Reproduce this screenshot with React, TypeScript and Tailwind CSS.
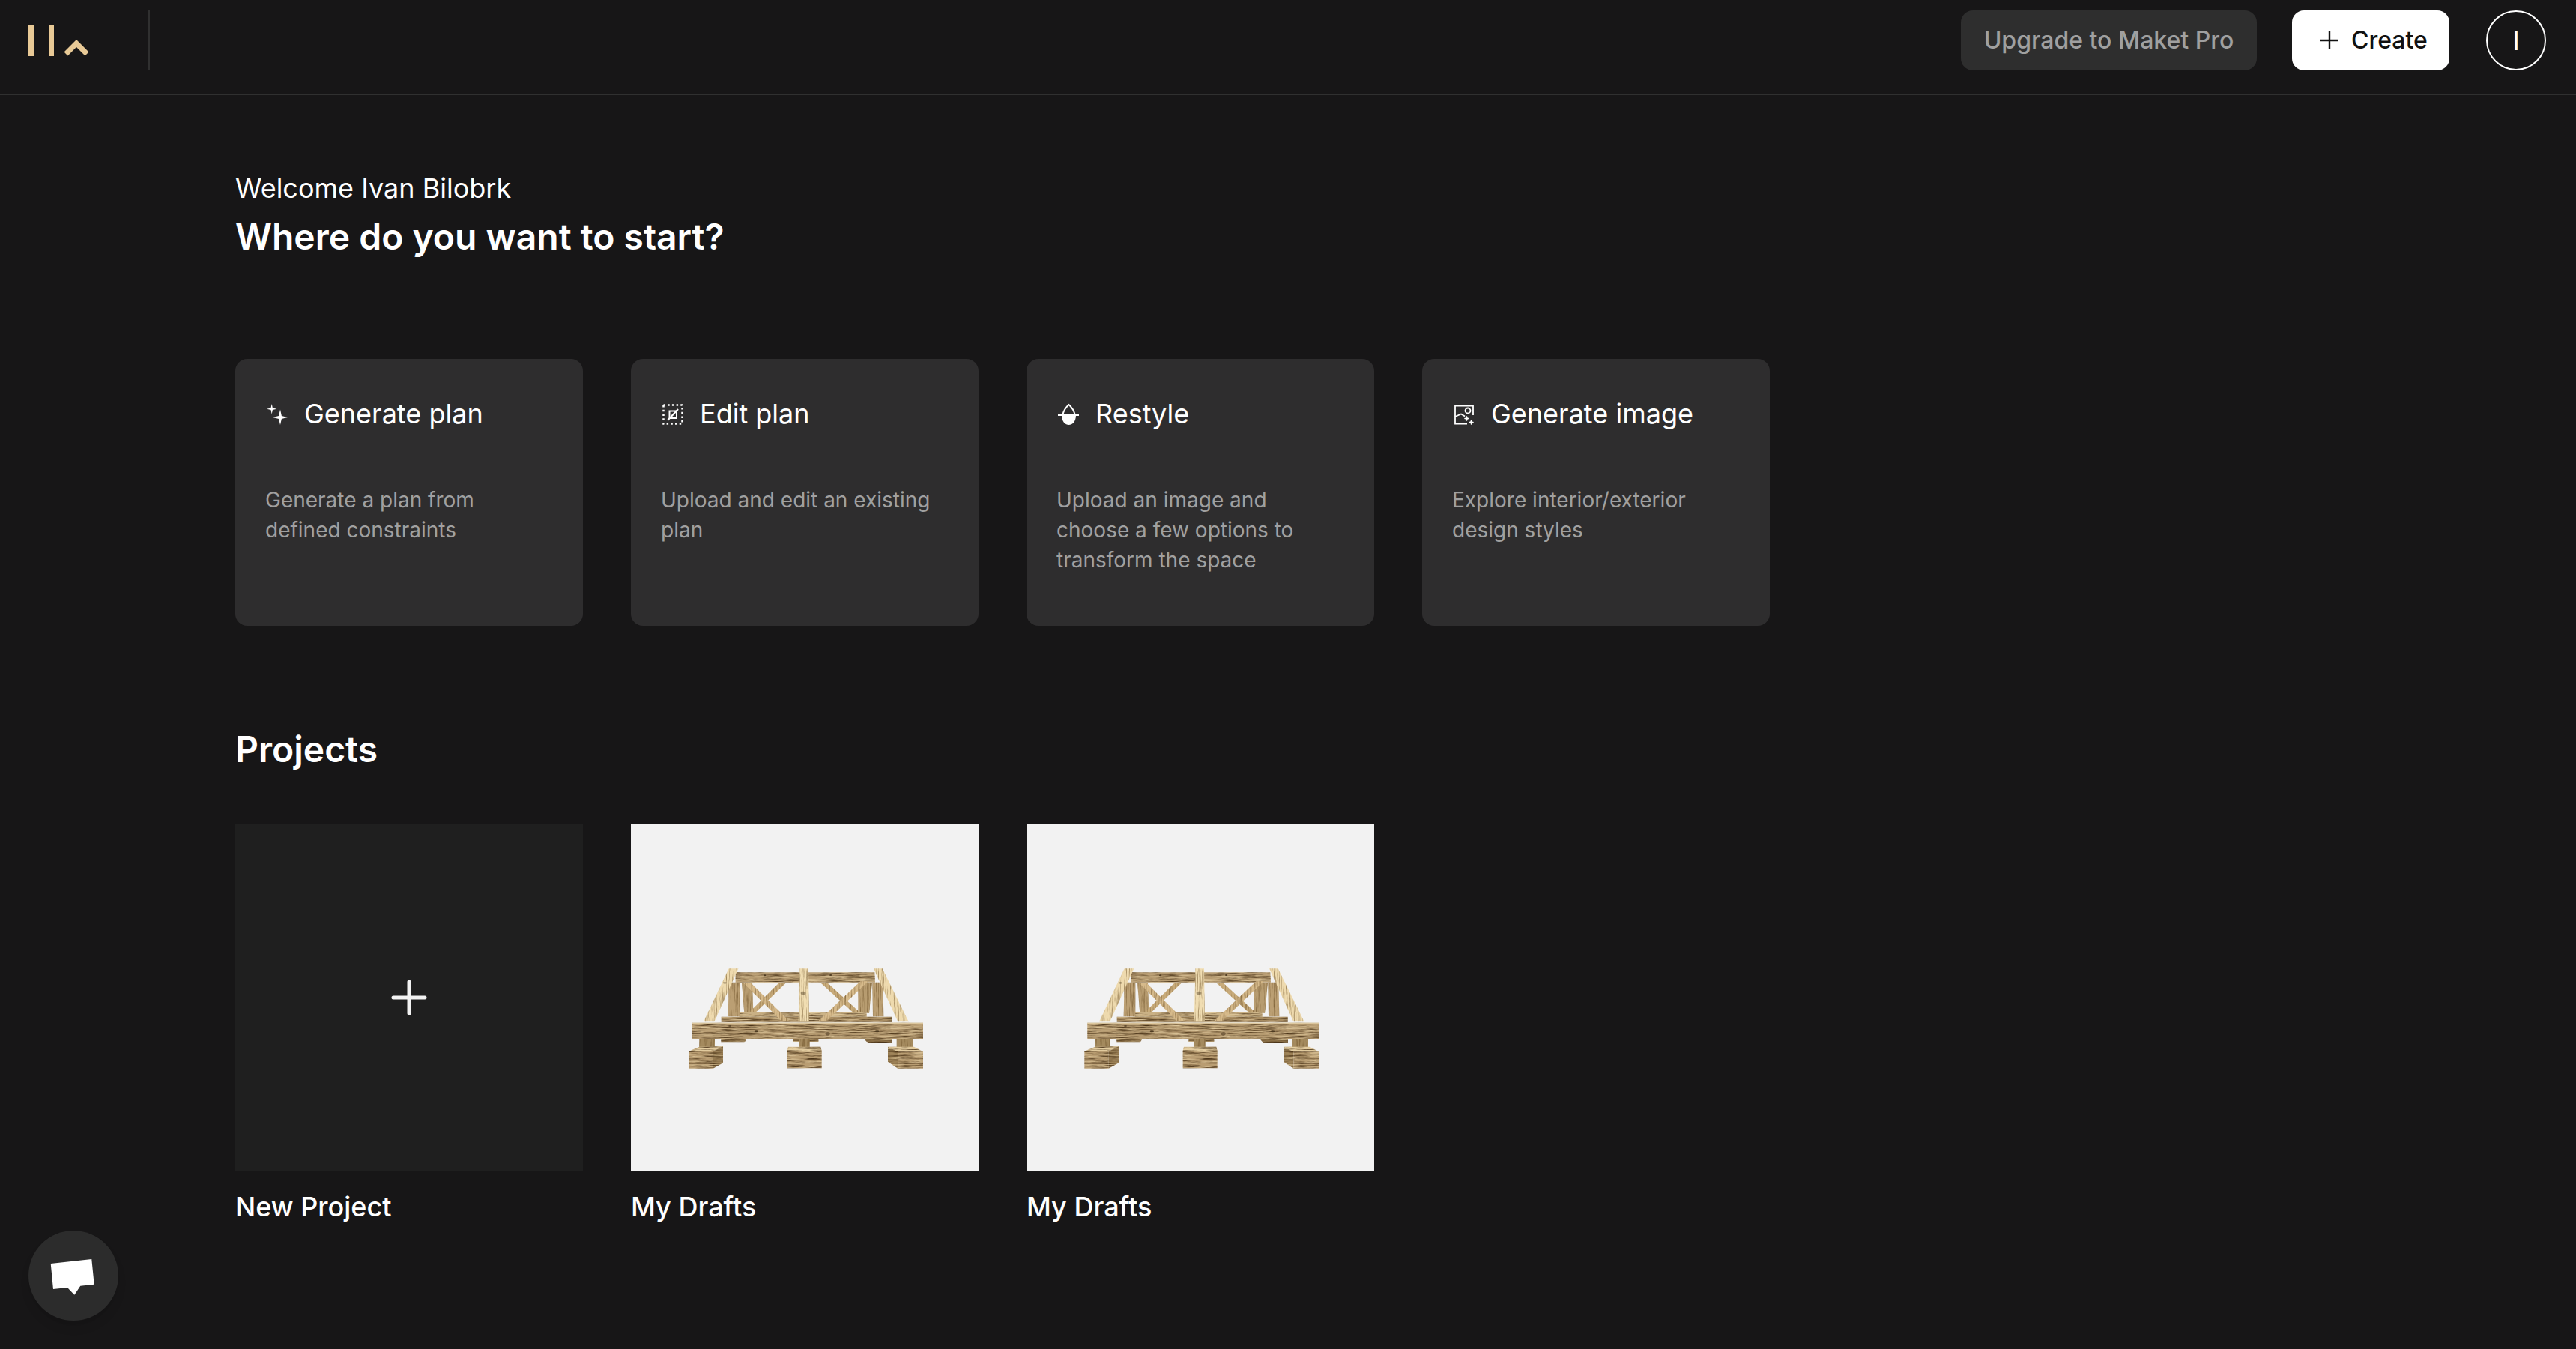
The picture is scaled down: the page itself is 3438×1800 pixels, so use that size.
import React from "react";

const cards = [
  { title: "Generate plan", desc: ["Generate a plan from", "defined constraints"], icon: "sparkle" },
  { title: "Edit plan", desc: ["Upload and edit an existing", "plan"], icon: "edit" },
  { title: "Restyle", desc: ["Upload an image and", "choose a few options to", "transform the space"], icon: "restyle" },
  { title: "Generate image", desc: ["Explore interior/exterior", "design styles"], icon: "image" },
];

const CardIcon = ({ name }: { name: string }) => {
  if (name === "sparkle") {
    return (
      <svg width="30" height="30" viewBox="0 0 30 30" fill="white" className="shrink-0">
        <path d="M8.700 2 L9.900 7.500 L15.400 8.700 L9.900 9.900 L8.700 15.400 L7.500 9.900 L2 8.700 L7.500 7.500 Z" />
        <path d="M20 9.500 L21.900 18.100 L30 20 L21.900 21.900 L20 30 L18.100 21.900 L10 20 L18.100 18.100 Z" />
      </svg>
    );
  }
  if (name === "edit") {
    return (
      <svg width="30" height="30" viewBox="0 0 30 30" fill="none" stroke="white" className="shrink-0">
        <rect x="3.500" y="3.500" width="25" height="25" strokeWidth="2.500" strokeDasharray="2.500 3.200" />
        <rect x="11.500" y="11.500" width="9.500" height="9.500" strokeWidth="2" />
        <path d="M9 24 L23 9" strokeWidth="2.200" />
      </svg>
    );
  }
  if (name === "restyle") {
    return (
      <svg width="30" height="30" viewBox="0 0 30 30" fill="none" className="shrink-0">
        <path d="M8 17 C10 10 13 6 16.500 3 C20 6 23 10 25 17" stroke="white" strokeWidth="2" />
        <path d="M2 17 H31" stroke="white" strokeWidth="2" />
        <path d="M7 17 H26 C26 26 21 30 16.500 30 C12 30 7 26 7 17 Z" fill="white" />
      </svg>
    );
  }
  return (
    <svg width="30" height="30" viewBox="0 0 30 30" fill="none" stroke="white" strokeWidth="1.800" className="shrink-0">
      <path d="M28 17 V4.500 H4 V28.500 H20" />
      <path d="M4 19 L12 15.500 L17 18.500" />
      <circle cx="21" cy="11" r="3.500" />
      <path d="M19.500 18 L20.500 20.500 L23 21.500 L20.500 22.500 L19.500 25 L18.500 22.500 L16 21.500 L18.500 20.500 Z" fill="white" strokeWidth="0.400" />
      <path d="M25.500 23 L26.500 25.500 L29 26.500 L26.500 27.500 L25.500 30 L24.500 27.500 L22 26.500 L24.500 25.500 Z" fill="white" strokeWidth="0.400" />
    </svg>
  );
};

// wooden truss from the project thumbnail, traced in 3x crop coordinates
const Truss = () => (
  <svg width="400" height="240" viewBox="0 0 1200 720">
    <defs>
      <filter id="grainH" x="0" y="0" width="100%" height="100%" colorInterpolationFilters="sRGB">
        <feTurbulence type="fractalNoise" baseFrequency="0.012 0.3" numOctaves="4" seed="4" result="n1" />
        <feColorMatrix in="n1" values="0 0 0 0 0.3 0 0 0 0 0.21 0 0 0 0 0.1 2.4 0 0 0 -1.05" result="dark" />
        <feComposite in="dark" in2="SourceAlpha" operator="in" result="darkIn" />
        <feTurbulence type="fractalNoise" baseFrequency="0.009 0.22" numOctaves="3" seed="21" result="n2" />
        <feColorMatrix in="n2" values="0 0 0 0 0.93 0 0 0 0 0.85 0 0 0 0 0.68 2.2 0 0 0 -1.05" result="light" />
        <feComposite in="light" in2="SourceAlpha" operator="in" result="lightIn" />
        <feMerge result="wood">
          <feMergeNode in="SourceGraphic" />
          <feMergeNode in="lightIn" />
          <feMergeNode in="darkIn" />
        </feMerge>
        <feGaussianBlur in="wood" stdDeviation="0.8" />
      </filter>
      <filter id="grainV" x="0" y="0" width="100%" height="100%" colorInterpolationFilters="sRGB">
        <feTurbulence type="fractalNoise" baseFrequency="0.25 0.012" numOctaves="4" seed="9" result="n1" />
        <feColorMatrix in="n1" values="0 0 0 0 0.42 0 0 0 0 0.31 0 0 0 0 0.15 1.8 0 0 0 -0.85" result="dark" />
        <feComposite in="dark" in2="SourceAlpha" operator="in" result="darkIn" />
        <feMerge result="wood">
          <feMergeNode in="SourceGraphic" />
          <feMergeNode in="darkIn" />
        </feMerge>
        <feGaussianBlur in="wood" stdDeviation="0.8" />
      </filter>
    </defs>
    <g filter="url(#grainV)">
      <polygon fill="#b79c70" points="330,215 372,215 376,330 340,336" />
      <polygon fill="#b79c70" points="796,215 852,215 840,336 796,330" />
      <polygon fill="#c8ab7a" points="480,213 508,213 388,330 362,330" />
      <polygon fill="#c8ab7a" points="645,213 672,213 800,330 775,332" />
    </g>
    <g filter="url(#grainH)">
      <polygon fill="#c9b084" points="320,332 830,332 830,350 320,350" />
      <polygon fill="#b79c72" points="305,172 862,172 864,212 305,212" />
      <polygon fill="#a98d62" points="248,350 932,350 932,371 248,371" />
    </g>
    <g filter="url(#grainV)">
      <polygon fill="#d6ba8b" points="335,213 365,213 521,368 490,368" />
      <polygon fill="#d6ba8b" points="805,208 836,208 668,368 636,368" />
      <polygon fill="#bb9f73" points="278,212 322,212 322,349 275,349" />
      <polygon fill="#bb9f73" points="853,212 895,212 898,349 855,349" />
      <polygon fill="#f0ddb2" points="562,157 597,157 600,370 557,370" />
      <polygon fill="#eedaae" points="278,157 316,157 220,370 177,370" />
      <polygon fill="#eedaae" points="858,157 893,157 998,370 955,370" />
    </g>
    <g filter="url(#grainH)">
      <polygon fill="#8a6f47" points="247,438 350,438 340,454 247,454" />
      <polygon fill="#8a6f47" points="535,438 637,438 637,452 535,452" />
      <polygon fill="#8a6f47" points="820,438 933,438 933,456 835,456" />
      <polygon fill="#b59a70" points="130,374 1056,374 1056,438 130,438" />
    </g>
    <g filter="url(#grainV)">
      <polygon fill="#a48a5e" points="160,438 222,438 222,480 160,486" />
      <polygon fill="#a48a5e" points="558,438 602,438 602,486 558,486" />
      <polygon fill="#a48a5e" points="950,438 1014,438 1014,486 950,480" />
    </g>
    <g filter="url(#grainH)">
      <polygon fill="#e2cb9e" points="118,488 160,470 255,468 215,488" />
      <polygon fill="#b99d72" points="118,488 215,488 215,557 118,557" />
      <polygon fill="#9c8156" points="215,488 255,468 255,535 215,557" />
      <polygon fill="#e2cb9e" points="512,486 516,470 646,470 650,486" />
      <polygon fill="#b99d72" points="512,486 650,486 650,556 512,556" />
      <polygon fill="#e2cb9e" points="915,470 1020,470 1056,490 955,490" />
      <polygon fill="#9c8156" points="915,470 955,490 955,557 915,530" />
      <polygon fill="#b99d72" points="955,490 1056,490 1056,557 955,557" />
    </g>
    <polygon fill="#e8d5ab" opacity="0.8" points="130,374 1056,374 1056,379 130,379" />
    <g fill="#4e3b22">
      <ellipse cx="422" cy="184" rx="5" ry="3" />
      <ellipse cx="686" cy="183" rx="5" ry="3" />
      <ellipse cx="388" cy="409" rx="8" ry="3" />
      <ellipse cx="872" cy="409" rx="8" ry="3" />
      <ellipse cx="674" cy="418" rx="9" ry="7" opacity="0.6" />
      <ellipse cx="282" cy="387" rx="6" ry="2.500" />
      <ellipse cx="576" cy="255" rx="10" ry="7" opacity="0.45" />
      <ellipse cx="262" cy="214" rx="8" ry="4" opacity="0.35" />
    </g>
  </svg>
);

const App = () => {
  return (
    <div className="relative min-h-[1800px] bg-[#171617] text-white font-['Inter',sans-serif]">
      <header className="flex items-start h-[127px] pt-[14px] border-b-2 border-[#303030] box-border">
        <svg className="ml-[38px] mt-[19px]" width="80" height="42" viewBox="0 0 80 42" fill="#e8c996">
          <rect x="0" y="0" width="7" height="42" />
          <rect x="27" y="0" width="7" height="42" />
          <polyline points="50,39 64,25 78,39" fill="none" stroke="#e8c996" strokeWidth="7" />
        </svg>
        <div className="ml-[80px] w-[2px] h-[80px] bg-[#303030]" />
        <div className="ml-auto flex items-center mr-[40px]">
          <button className="w-[395px] h-[80px] rounded-2xl bg-[#2e2e2e] text-[#a0a0a0] text-[32px] font-medium">
            Upgrade to Maket Pro
          </button>
          <button className="ml-[47px] w-[210px] h-[80px] rounded-2xl bg-white text-[#111111] text-[32px] font-medium flex items-center pl-[38px] gap-[17px]">
            <svg width="24" height="24" viewBox="0 0 24 24" stroke="#111111" strokeWidth="2.400">
              <path d="M12 0 V24 M0 12 H24" />
            </svg>
            Create
          </button>
          <div className="ml-[49px] w-[80px] h-[80px] rounded-full border-2 border-white flex items-center justify-center text-[36px]">
            I
          </div>
        </div>
      </header>

      <main className="pl-[314px]">
        <p className="mt-[102px] text-[36px] leading-[44px]">Welcome Ivan Bilobrk</p>
        <h1 className="mt-[10px] text-[48px] leading-[66px] font-semibold">Where do you want to start?</h1>

        <div className="mt-[130px] flex gap-[64px]">
          {cards.map((card) => (
            <div key={card.title} className="w-[464px] h-[356px] rounded-2xl bg-[#2e2d2e] px-[40px] pt-[53px]">
              <div className="flex items-center gap-[22px] h-[40px] text-[36px]">
                <CardIcon name={card.icon} />
                {card.title}
              </div>
              <div className="mt-[75px] text-[28px] leading-[40px] text-[#a0a0a0]">
                {card.desc.map((line) => (
                  <p key={line}>{line}</p>
                ))}
              </div>
            </div>
          ))}
        </div>

        <h2 className="mt-[132px] text-[48px] leading-[66px] font-semibold">Projects</h2>

        <div className="mt-[66px] flex gap-[64px]">
          <div className="w-[464px]">
            <div className="h-[464px] bg-[#1f1f1f] flex items-center justify-center">
              <svg width="48" height="48" viewBox="0 0 48 48" stroke="#f2f2f2" strokeWidth="5" strokeLinecap="round">
                <path d="M24 3 V45 M3 24 H45" />
              </svg>
            </div>
            <p className="mt-[25px] text-[36px] leading-[44px] font-medium">New Project</p>
          </div>
          {[0, 1].map((i) => (
            <div key={i} className="w-[464px]">
              <div className="h-[464px] bg-[#f2f2f2] pt-[141px] pl-[38px]">
                <Truss />
              </div>
              <p className="mt-[25px] text-[36px] leading-[44px] font-medium">My Drafts</p>
            </div>
          ))}
        </div>
      </main>

      <div className="absolute left-[38px] bottom-[38px] w-[120px] h-[120px] rounded-full bg-[#2c2c2c] shadow-lg">
        <svg width="120" height="120" viewBox="0 0 120 120" fill="white">
          <polygon points="29.700,44 84.300,38 87.700,71.700 69.300,73.700 61.300,85.700 52,76 33,78" />
        </svg>
      </div>
    </div>
  );
};

export default App;
